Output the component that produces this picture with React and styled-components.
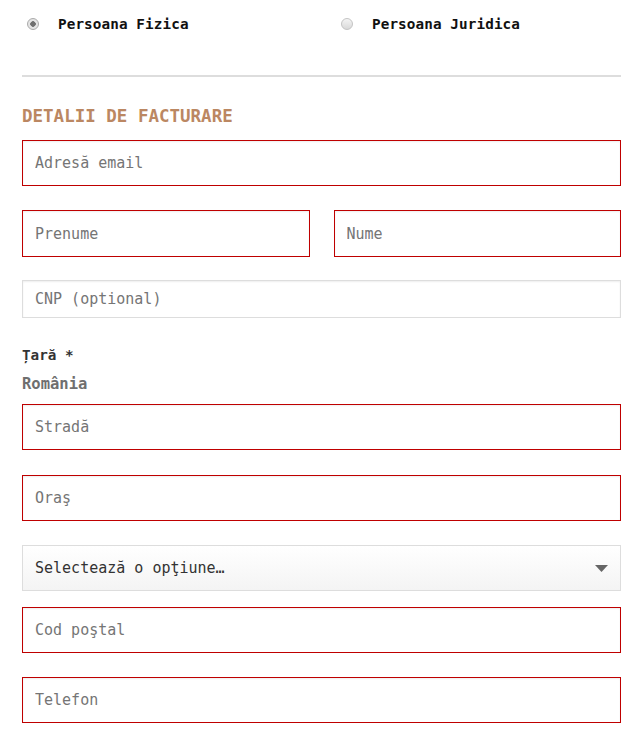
import React from 'react'
import styled, { createGlobalStyle } from 'styled-components'

const GlobalStyle = createGlobalStyle`
  body {
    margin: 0;
    background: #fff;
    font-family: 'DejaVu Sans Mono', 'Liberation Mono', monospace;
  }
`

export default function App() {
  return (
    <>
      <GlobalStyle />
      <Form>
        <RadioRow>
          <RadioItem>
            <Radio checked />
            <RadioLabel>Persoana Fizica</RadioLabel>
          </RadioItem>
          <RadioItem>
            <Radio />
            <RadioLabel>Persoana Juridica</RadioLabel>
          </RadioItem>
        </RadioRow>
        <Divider />
        <Heading>DETALII DE FACTURARE</Heading>
        <Input $invalid placeholder='Adresă email' />
        <Row $mt={24}>
          <Input $invalid $h={47} placeholder='Prenume' />
          <Input $invalid $h={47} placeholder='Nume' />
        </Row>
        <Input $mt={23} $h={38} placeholder='CNP (optional)' />
        <FieldLabel>Țară *</FieldLabel>
        <Country>România</Country>
        <Input $invalid $mt={10} placeholder='Stradă' />
        <Input $invalid $mt={25} placeholder='Oraş' />
        <Select>
          <span>Selectează o opţiune…</span>
          <svg width='13' height='7' viewBox='0 0 13 7'>
            <path d='M0 0h13L6.5 7z' fill='#666' />
          </svg>
        </Select>
        <Input $invalid $mt={16} placeholder='Cod poştal' />
        <Input $invalid $mt={24} placeholder='Telefon' />
      </Form>
    </>
  )
}

const Form = styled.div`
  padding: 0 17px 0 22px;
  display: flex;
  flex-direction: column;
`

const RadioRow = styled.div`
  display: grid;
  grid-template-columns: 314px 1fr;
  padding-top: 14px;
`

const RadioItem = styled.label`
  display: flex;
  align-items: center;
  padding-left: 5px;
  height: 20px;
`

const Radio = styled.span`
  width: 12px;
  height: 12px;
  box-sizing: border-box;
  border-radius: 50%;
  border: 1px solid ${(p) => (p.checked ? '#aaa' : '#c4c4c4')};
  background: ${(p) =>
    p.checked
      ? 'radial-gradient(circle, #6f6f6f 0 2.5px, #e4e4e4 3px)'
      : 'linear-gradient(#f4f4f4, #d9d9d9)'};
  margin-right: 19px;
  flex: none;
`

const RadioLabel = styled.span`
  font-size: 14.3px;
  font-weight: bold;
  color: #111;
  letter-spacing: 0.1px;
`

const Divider = styled.hr`
  border: 0;
  height: 2px;
  background: #ddd;
  margin: 41px 0 0;
`

const Heading = styled.h3`
  margin: 27px 0 12px;
  font-size: 17.5px;
  line-height: 24px;
  font-weight: bold;
  color: #bb8762;
`

const Input = styled.input`
  display: block;
  width: 100%;
  box-sizing: border-box;
  height: ${(p) => p.$h || 46}px;
  margin: ${(p) => p.$mt || 0}px 0 0;
  padding: 0 12px;
  border: 1px solid ${(p) => (p.$invalid ? '#bf0000' : '#ddd')};
  box-shadow: inset 0 1px 2px rgba(0, 0, 0, 0.07);
  font-family: inherit;
  font-size: 15px;
  color: #333;
  background: #fff;
  outline: none;
  &::placeholder {
    color: #757575;
  }
`

const Row = styled.div`
  display: grid;
  grid-template-columns: 1fr 1fr;
  gap: 24px;
  margin-top: ${(p) => p.$mt || 0}px;
`

const FieldLabel = styled.div`
  margin-top: 27px;
  font-size: 14.3px;
  line-height: 20px;
  font-weight: bold;
  color: #333;
`

const Country = styled.div`
  margin-top: 9px;
  font-size: 15.5px;
  line-height: 20px;
  font-weight: bold;
  color: #6f6f6f;
`

const Select = styled.div`
  margin-top: 24px;
  height: 46px;
  box-sizing: border-box;
  border: 1px solid #ddd;
  background: linear-gradient(#fff, #f4f4f4);
  display: flex;
  align-items: center;
  justify-content: space-between;
  padding: 0 12px;
  font-size: 15px;
  color: #333;
`
